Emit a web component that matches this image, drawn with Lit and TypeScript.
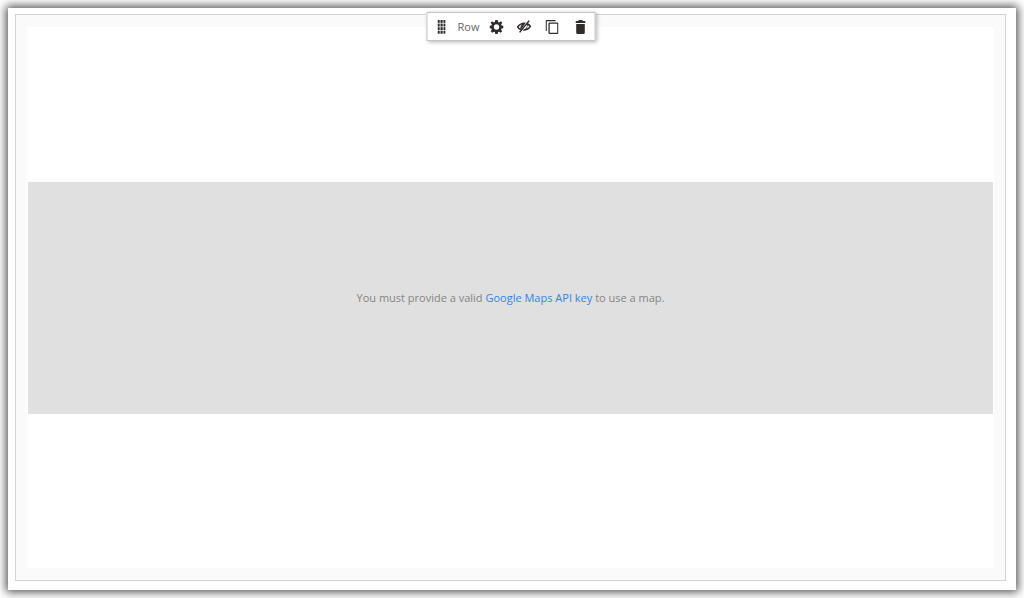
import { LitElement, html, css, svg } from "lit";
import { customElement } from "lit/decorators.js";

const dots = [0, 3.6, 7.2, 10.8].flatMap((y) =>
  [0, 3, 6].map((x) => svg`<rect x=${x} y=${y} width="2.200" height="2.900" />`)
);

@customElement("row-toolbar")
export class RowToolbar extends LitElement {
  static styles = css`
    :host {
      display: block;
    }
    .bar {
      display: flex;
      align-items: center;
      background: #fff;
      border: 1px solid #c4c4c4;
      box-shadow: 1px 1px 4px rgba(0, 0, 0, 0.3);
      color: #666;
      font: 11px/16px "Open Sans", "Noto Sans", sans-serif;
    }
    .label {
      width: 27px;
      text-align: center;
    }
    .action {
      display: flex;
      align-items: center;
      justify-content: center;
      width: 28px;
      height: 27px;
      padding: 0;
      border: 0;
      background: none;
      color: #302c2b;
      cursor: pointer;
    }
    .handle {
      cursor: move;
    }
    svg {
      display: block;
      fill: currentColor;
    }
  `;

  render() {
    return html`
      <div class="bar" role="toolbar" aria-label="Row">
        <button class="action handle" aria-label="Move">
          <svg width="8" height="14" viewBox="0 0 8 14">${dots}</svg>
        </button>
        <span class="label">Row</span>
        <button class="action" aria-label="Settings">
          <svg width="14" height="14" viewBox="0 0 14 14">
            <path
              fill-rule="evenodd"
              d="M5.8 0h2.4l.4 1.9 1.1.5L11.3 1.300 12.800 2.800 11.600 4.400 12.100 5.400 14 5.800v2.400l-1.900.4-.5 1.100 1.100 1.600-1.500 1.500-1.600-1.100-1 .4L8.200 14H5.800l-.4-1.900-1.100-.4-1.600 1.100-1.500-1.500 1.100-1.600-.4-1.100L0 8.200V5.800l1.900-.4.4-1L1.200 2.800l1.500-1.500 1.600 1.100 1.100-.5zM7 4.300a2.700 2.700 0 1 0 0 5.400a2.700 2.700 0 1 0 0-5.400z"
            />
          </svg>
        </button>
        <button class="action" aria-label="Hide">
          <svg width="15" height="13" viewBox="0 0 15 13">
            <path
              fill-rule="evenodd"
              d="M.3 7C2.200 3.800 5 2.300 9.300 2.500L4.200 10.300C2.500 9.600 1.200 8.500.3 7zM6 4.200C4.500 4.700 3.100 5.600 2.200 6.900c.5.700 1.100 1.200 1.800 1.600C3.700 6.900 4.500 5.100 6 4.200z"
            />
            <path
              fill-rule="evenodd"
              d="M11 3c1.600.6 2.900 1.800 3.700 3.500-1.700 3-4.600 4.500-8.500 4.300l1-1.500c1.800-.3 3-1.500 3.300-3.100L10.200 4.500zM11 5.500c.1 1.300-.2 2.400-1 3.300 1.200-.5 2.100-1.200 2.900-2.300-.5-.7-1.200-1.200-1.900-1z"
            />
            <path d="M12.100.2 13.300 1 3.700 12.800 2.500 12z" />
          </svg>
        </button>
        <button class="action" aria-label="Duplicate">
          <svg width="13" height="14" viewBox="0 0 13 14">
            <path d="M1.300 0H10v1.300H1.300V11H0V1.300Q0 0 1.300 0z" />
            <path
              fill-rule="evenodd"
              d="M4.200 2.500h7.500q1.300 0 1.300 1.300v8.900q0 1.300-1.300 1.300H4.200q-1.300 0-1.300-1.300V3.800q0-1.300 1.300-1.300zM4.200 3.800v8.900h7.500V3.800z"
            />
          </svg>
        </button>
        <button class="action" aria-label="Remove">
          <svg width="10" height="14" viewBox="0 0 10 14">
            <path d="M3.200 0h3.600l.6 1.100H10V3H0V1.100h2.600zM.7 4h8.600v8.500Q9.300 14 7.800 14H2.200Q.7 14 .7 12.500z" />
          </svg>
        </button>
      </div>
    `;
  }
}

@customElement("app-root")
export class AppRoot extends LitElement {
  static styles = css`
    :host {
      display: flex;
      box-sizing: border-box;
      min-height: 100vh;
      padding: 8px;
      background: #fff;
      overflow: hidden;
    }
    .panel {
      display: flex;
      flex: 1;
      box-sizing: border-box;
      padding: 6px 10px 9px 7px;
      background: #fff;
      box-shadow: 0 0 9px 2px rgba(0, 0, 0, 0.7);
    }
    .row {
      position: relative;
      display: flex;
      flex: 1;
      box-sizing: border-box;
      padding: 12px 11px;
      border: 1px solid #d3d3d3;
      background: #fafafa;
    }
    .content {
      display: flex;
      flex: 1;
      align-items: center;
      padding: 0 1px;
      background: #fff;
    }
    .map {
      display: flex;
      flex: 1;
      align-items: center;
      justify-content: center;
      height: 232px;
      background: #e0e0e0;
    }
    .notice {
      margin: 0;
      color: #858585;
      font: 11px/16px "Open Sans", "Noto Sans", sans-serif;
    }
    .link {
      color: #2f86e0;
      text-decoration: none;
    }
    .tools {
      position: absolute;
      top: -3px;
      left: 50%;
      transform: translateX(-50%);
    }
  `;

  render() {
    return html`
      <main class="panel">
        <section class="row">
          <row-toolbar class="tools"></row-toolbar>
          <div class="content">
            <div class="map">
              <p class="notice">
                You must provide a valid
                <a class="link" href="#">Google Maps API key</a> to use a map.
              </p>
            </div>
          </div>
        </section>
      </main>
    `;
  }
}
